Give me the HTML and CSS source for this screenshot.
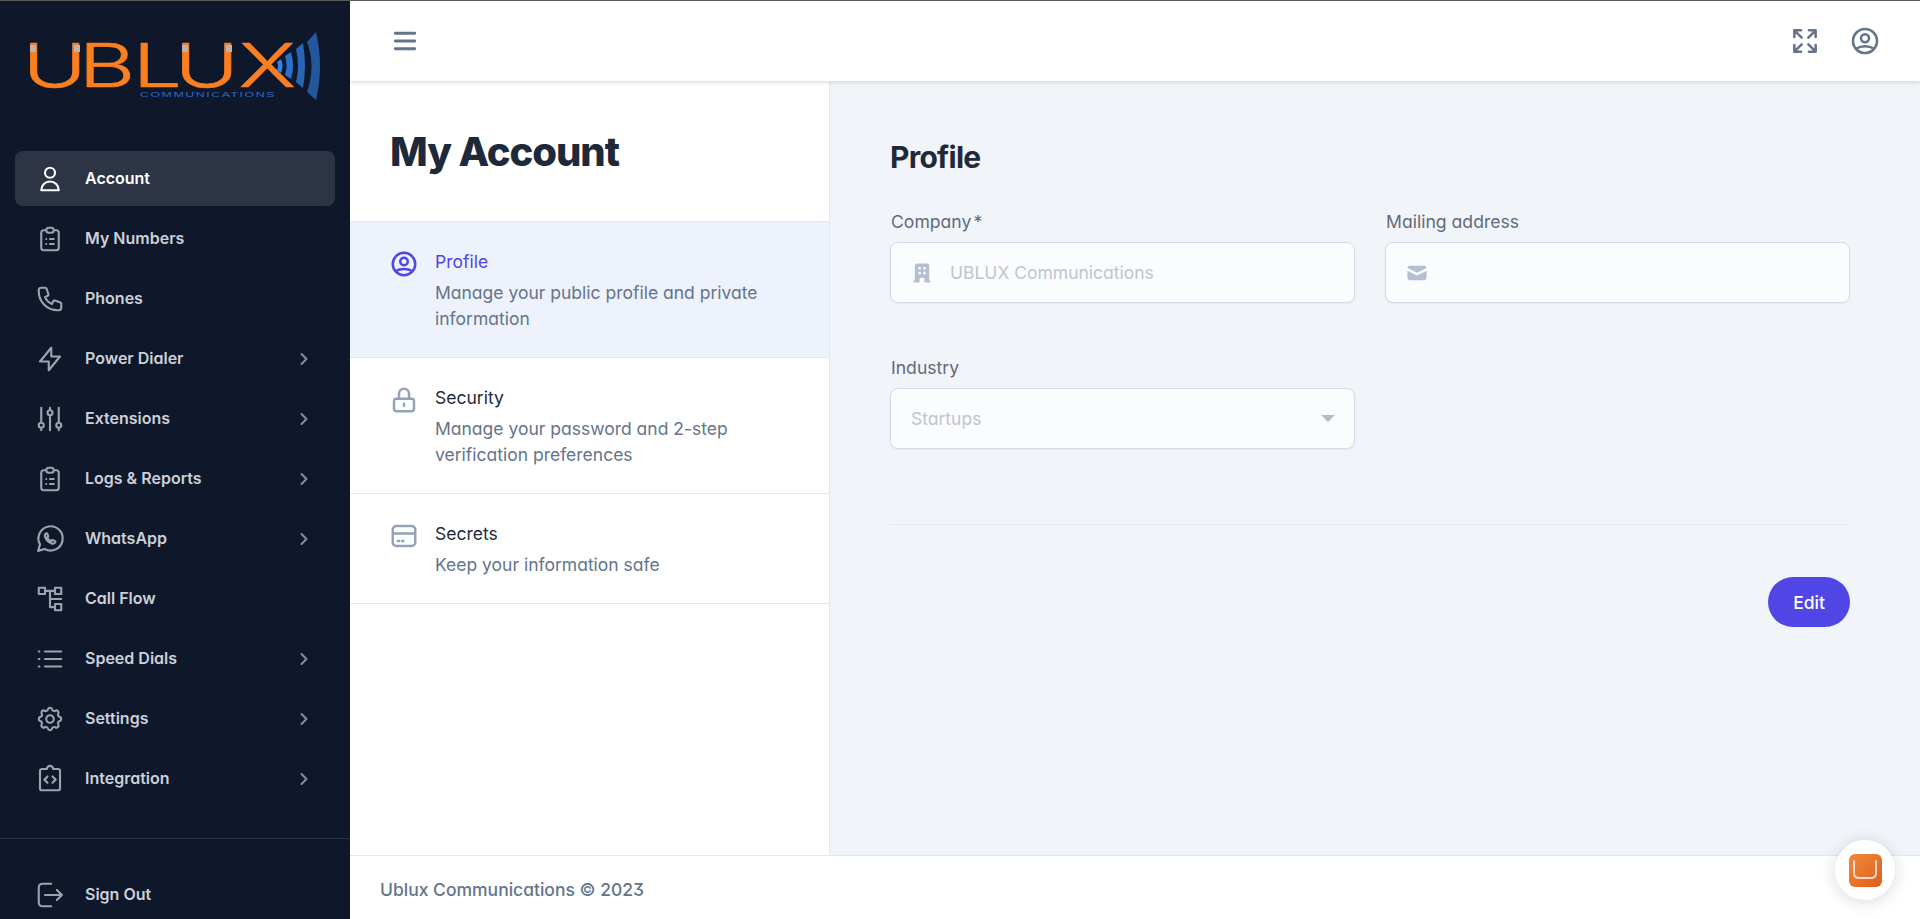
FILE: index.html
```html
<!DOCTYPE html>
<html lang="en">
<head>
<meta charset="utf-8">
<title>My Account</title>
<link rel="stylesheet" href="styles.css">
</head>
<body>
<svg class="defs" width="0" height="0" aria-hidden="true">
  <symbol id="i-user" viewBox="0 0 24 24"><path d="M16 7a4 4 0 1 1-8 0 4 4 0 0 1 8 0zM12 14a7 7 0 0 0-7 7h14a7 7 0 0 0-7-7z"/></symbol>
  <symbol id="i-clip" viewBox="0 0 24 24"><path d="M9 5H7a2 2 0 0 0-2 2v12a2 2 0 0 0 2 2h10a2 2 0 0 0 2-2V7a2 2 0 0 0-2-2h-2M9 5a2 2 0 0 0 2 2h2a2 2 0 0 0 2-2M9 5a2 2 0 0 1 2-2h2a2 2 0 0 1 2 2m-3 7h3m-3 4h3m-6-4h.01M9 16h.01"/></symbol>
  <symbol id="i-phone" viewBox="0 0 24 24"><path d="M3 5a2 2 0 0 1 2-2h3.28a1 1 0 0 1 .948.684l1.498 4.493a1 1 0 0 1-.502 1.21l-2.257 1.13a11.042 11.042 0 0 0 5.516 5.516l1.13-2.257a1 1 0 0 1 1.21-.502l4.493 1.498a1 1 0 0 1 .684.949V19a2 2 0 0 1-2 2h-1C9.716 21 3 14.284 3 6V5z"/></symbol>
  <symbol id="i-bolt" viewBox="0 0 24 24"><path d="M13 3L4 14h7v7l9-11h-7z"/></symbol>
  <symbol id="i-adjust" viewBox="0 0 24 24"><path d="M5 3v12m0 4v2M12 3v2m0 4v12M19 3v12m0 4v2M5 15a2 2 0 1 0 0 4 2 2 0 0 0 0-4zM12 5a2 2 0 1 0 0 4 2 2 0 0 0 0-4zM19 15a2 2 0 1 0 0 4 2 2 0 0 0 0-4z"/></symbol>
  <symbol id="i-whatsapp" viewBox="0 0 24 24"><path d="M2.500 21.500l1.500-5.200A9.700 9.700 0 1 1 7.700 20z"/><path d="M8.700 7.600c-.8.6-1 1.700-.5 3 1 2.400 2.700 4 5 4.900 1.200.4 2.300.2 2.900-.7.300-.5.300-.9-.1-1.100l-1.900-.9c-.3-.1-.5 0-.7.2l-.6.8c-1.400-.5-2.500-1.600-3.100-3l.7-.7c.2-.2.200-.4.100-.7l-.7-1.700c-.2-.4-.7-.4-1.100-.1z"/></symbol>
  <symbol id="i-flow" viewBox="0 0 24 24"><path d="M3 3h5v5H3zM16 3h5v5h-5zM16 16h5v5h-5zM8 5.500h8M12 5.500v13h4M12 12h9"/></symbol>
  <symbol id="i-list" viewBox="0 0 24 24"><path d="M8 6h13M8 12h13M8 18h13M3 6h.5M3 12h.5M3 18h.5"/></symbol>
  <symbol id="i-cog" viewBox="0 0 24 24"><path d="M10.325 4.317c.426-1.756 2.924-1.756 3.35 0a1.724 1.724 0 0 0 2.573 1.066c1.543-.94 3.31.826 2.370 2.370a1.724 1.724 0 0 0 1.065 2.572c1.756.426 1.756 2.924 0 3.350a1.724 1.724 0 0 0-1.066 2.573c.94 1.543-.826 3.31-2.370 2.370a1.724 1.724 0 0 0-2.572 1.065c-.426 1.756-2.924 1.756-3.350 0a1.724 1.724 0 0 0-2.573-1.066c-1.543.94-3.31-.826-2.370-2.370a1.724 1.724 0 0 0-1.065-2.572c-1.756-.426-1.756-2.924 0-3.350a1.724 1.724 0 0 0 1.066-2.573c-.94-1.543.826-3.31 2.370-2.370.996.608 2.296.07 2.572-1.065z"/><path d="M15 12a3 3 0 1 1-6 0 3 3 0 0 1 6 0z"/></symbol>
  <symbol id="i-code" viewBox="0 0 24 24"><path d="M9.500 4H5.500A1.500 1.500 0 0 0 4 5.500v14A1.500 1.500 0 0 0 5.500 21h13a1.500 1.500 0 0 0 1.500-1.500v-14A1.500 1.500 0 0 0 18.500 4h-4M9.500 4a2.500 2.500 0 0 1 5 0M10 10l-2.500 2.500L10 15M14 10l2.500 2.500L14 15"/></symbol>
  <symbol id="i-logout" viewBox="0 0 24 24"><path d="M13 3H6a3 3 0 0 0-3 3v12a3 3 0 0 0 3 3h7M8 12h13M17.500 8l4 4-4 4"/></symbol>
  <symbol id="i-chev" viewBox="0 0 20 20"><path d="M7.500 5l5 5-5 5"/></symbol>
  <symbol id="i-circle-user" viewBox="0 0 24 24"><path d="M5.121 17.804A13.937 13.937 0 0 1 12 16c2.500 0 4.847.655 6.879 1.804M15 10a3 3 0 1 1-6 0 3 3 0 0 1 6 0zM21 12a9 9 0 1 1-18 0 9 9 0 0 1 18 0z"/></symbol>
  <symbol id="i-lock" viewBox="0 0 24 24"><path d="M12 15v1.500M6 21h12a2 2 0 0 0 2-2v-6a2 2 0 0 0-2-2H6a2 2 0 0 0-2 2v6a2 2 0 0 0 2 2zM8 11V7a4 4 0 1 1 8 0v4"/></symbol>
  <symbol id="i-card" viewBox="0 0 24 24"><path d="M3 10h18M7 16h1M10.500 16h1M6 20h12a3 3 0 0 0 3-3V7a3 3 0 0 0-3-3H6a3 3 0 0 0-3 3v10a3 3 0 0 0 3 3z"/></symbol>
</svg>

<div class="app">
  <aside class="sidebar">
    <div class="logo">
      <svg class="logo-svg" width="300" height="72" viewBox="0 0 300 72">
        <g transform="scale(1.45 1)"><text class="logo-word" x="-5 33.600 70.900 99.800 143.800" y="57">UBLUX</text></g>
        <rect class="logo-cap" x="0" y="15" width="6" height="7"/>
        <rect class="logo-cap" x="44" y="15" width="6" height="7"/>
        <rect class="logo-cap" x="152" y="15" width="6" height="7"/>
        <rect class="logo-cap" x="196" y="15" width="6" height="7"/>
        <text class="logo-sub" x="110" y="67" textLength="136" lengthAdjust="spacingAndGlyphs">COMMUNICATIONS</text>
        <path class="wave1" d="M247 32L251 29Q254 36 251 43L247 40Q249 36 247 32z"/>
        <path class="wave2" d="M255 26L261 22Q265 36 261 49L255 45Q258 36 255 26z"/>
        <path class="wave3" d="M266 19L273 13Q277 36 273 58L266 52Q270 36 266 19z"/>
        <path class="wave4" d="M277 12L286 2Q294 36 286 70L277 62Q286 36 277 12z"/>
      </svg>
    </div>
    <nav class="nav">
      <a class="nav-item is-active"><svg class="nav-icon"><use href="#i-user"/></svg><span class="nav-label">Account</span></a>
      <a class="nav-item"><svg class="nav-icon"><use href="#i-clip"/></svg><span class="nav-label">My Numbers</span></a>
      <a class="nav-item"><svg class="nav-icon"><use href="#i-phone"/></svg><span class="nav-label">Phones</span></a>
      <a class="nav-item"><svg class="nav-icon"><use href="#i-bolt"/></svg><span class="nav-label">Power Dialer</span><svg class="nav-chev"><use href="#i-chev"/></svg></a>
      <a class="nav-item"><svg class="nav-icon"><use href="#i-adjust"/></svg><span class="nav-label">Extensions</span><svg class="nav-chev"><use href="#i-chev"/></svg></a>
      <a class="nav-item"><svg class="nav-icon"><use href="#i-clip"/></svg><span class="nav-label">Logs &amp; Reports</span><svg class="nav-chev"><use href="#i-chev"/></svg></a>
      <a class="nav-item"><svg class="nav-icon"><use href="#i-whatsapp"/></svg><span class="nav-label">WhatsApp</span><svg class="nav-chev"><use href="#i-chev"/></svg></a>
      <a class="nav-item"><svg class="nav-icon"><use href="#i-flow"/></svg><span class="nav-label">Call Flow</span></a>
      <a class="nav-item"><svg class="nav-icon"><use href="#i-list"/></svg><span class="nav-label">Speed Dials</span><svg class="nav-chev"><use href="#i-chev"/></svg></a>
      <a class="nav-item"><svg class="nav-icon"><use href="#i-cog"/></svg><span class="nav-label">Settings</span><svg class="nav-chev"><use href="#i-chev"/></svg></a>
      <a class="nav-item"><svg class="nav-icon"><use href="#i-code"/></svg><span class="nav-label">Integration</span><svg class="nav-chev"><use href="#i-chev"/></svg></a>
    </nav>
    <div class="signout">
      <a class="nav-item"><svg class="nav-icon"><use href="#i-logout"/></svg><span class="nav-label">Sign Out</span></a>
    </div>
  </aside>

  <div class="content">
    <header class="topbar">
      <svg class="bar-icon menu-icon" viewBox="0 0 24 24"><path d="M4.700 6.200h14.600M4.700 12h14.600M4.700 17.800h14.600"/></svg>
      <div class="top-actions">
        <svg class="bar-icon" viewBox="0 0 24 24"><path d="M4 9V4h5M4 4l5.500 5.500M20 9V4h-5M20 4l-5.500 5.500M4 15v5h5M4 20l5.500-5.500M20 15v5h-5M20 20l-5.500-5.500"/></svg>
        <svg class="bar-icon"><use href="#i-circle-user"/></svg>
      </div>
    </header>

    <div class="workspace">
      <section class="panel">
        <h1 class="panel-title">My Account</h1>
        <a class="tab is-active">
          <svg class="tab-icon"><use href="#i-circle-user"/></svg>
          <div class="tab-text"><div class="tab-name">Profile</div><div class="tab-desc">Manage your public profile and private information</div></div>
        </a>
        <a class="tab">
          <svg class="tab-icon"><use href="#i-lock"/></svg>
          <div class="tab-text"><div class="tab-name">Security</div><div class="tab-desc">Manage your password and 2-step verification preferences</div></div>
        </a>
        <a class="tab">
          <svg class="tab-icon"><use href="#i-card"/></svg>
          <div class="tab-text"><div class="tab-name">Secrets</div><div class="tab-desc">Keep your information safe</div></div>
        </a>
      </section>

      <main class="main">
        <h2 class="main-title">Profile</h2>
        <div class="form-grid">
          <div class="field">
            <label class="field-label">Company<span class="req">*</span></label>
            <div class="input">
              <svg class="input-icon" viewBox="0 0 20 20"><path fill-rule="evenodd" d="M4 4a2 2 0 0 1 2-2h8a2 2 0 0 1 2 2v12a1 1 0 1 1 0 2h-3a1 1 0 0 1-1-1v-2a1 1 0 0 0-1-1H9a1 1 0 0 0-1 1v2a1 1 0 0 1-1 1H4a1 1 0 1 1 0-2V4zm3 1h2v2H7V5zm2 4H7v2h2V9zm2-4h2v2h-2V5zm2 4h-2v2h2V9z" clip-rule="evenodd"/></svg>
              <span class="input-text">UBLUX Communications</span>
            </div>
          </div>
          <div class="field">
            <label class="field-label">Mailing address</label>
            <div class="input">
              <svg class="input-icon" viewBox="0 0 20 20"><path d="M2.003 5.884L10 9.882l7.997-3.998A2 2 0 0 0 16 4H4a2 2 0 0 0-1.997 1.884z"/><path d="M18 8.118l-8 4-8-4V14a2 2 0 0 0 2 2h12a2 2 0 0 0 2-2V8.118z"/></svg>
            </div>
          </div>
          <div class="field">
            <label class="field-label">Industry</label>
            <div class="input is-select">
              <span class="input-text">Startups</span>
              <span class="caret"></span>
            </div>
          </div>
        </div>
        <div class="form-footer">
          <button class="btn-edit" type="button">Edit</button>
        </div>
      </main>
    </div>

    <footer class="footer">Ublux Communications © 2023</footer>
  </div>
</div>

<div class="chat">
  <div class="chat-tile">
    <svg class="chat-u" viewBox="0 0 24 20"><path d="M1 1v12q0 5 5 5h12q5 0 5-5V1"/></svg>
  </div>
</div>
</body>
</html>
```

FILE: styles.css
```css
* { box-sizing: border-box; }
html, body { height: 100%; margin: 0; }
body {
  font-family: Inter, "Noto Sans", sans-serif;
  font-feature-settings: "cv11", "ss01";
  border-top: 1px solid #5a5a5a;
  overflow: hidden;
  color: #1e293b;
  background: #fff;
}
.defs { position: absolute; }
svg { display: block; flex: none; fill: none; stroke: currentColor; stroke-linecap: round; stroke-linejoin: round; }
.app { display: flex; height: 918px; }

/* sidebar */
.sidebar { width: 350px; flex: none; display: flex; flex-direction: column; background: #0f172a; }
.logo { height: 150px; padding: 29px 0 0 30px; }
.logo-svg { overflow: visible; }
.logo-word { font-family: Inter, sans-serif; font-feature-settings: normal; font-size: 60px; font-weight: 300; fill: #fb7f1e; stroke: #fb7f1e; stroke-width: .7; stroke-linecap: butt; }
.logo-cap { fill: #b3b5b8; stroke: none; }
.logo-sub { font-family: "Liberation Sans", sans-serif; font-size: 8px; letter-spacing: 1px; fill: #2c6bc4; stroke: none; }
.wave1 { fill: #2f83ea; stroke: none; }
.wave2 { fill: #2a70c8; stroke: none; }
.wave3 { fill: #2866b4; stroke: none; }
.wave4 { fill: #24569c; stroke: none; }
.nav { flex: 1; padding: 0 15px; display: flex; flex-direction: column; gap: 5px; }
.nav-item { display: flex; align-items: center; height: 55px; padding: 0 20px; border-radius: 8px; color: #cbd0d9; }
.nav-item.is-active { background: #2d3446; color: #fff; }
.nav-icon { width: 30px; height: 30px; stroke-width: 1.7; color: #9ca3af; }
.is-active .nav-icon { color: #fff; }
.nav-label { margin: 0 0 2px 20px; flex: 1; font-size: 16px; font-weight: 600; line-height: 20px; }
.nav-chev { width: 20px; height: 20px; stroke-width: 2; color: #8390a5; margin-right: 1px; }
.signout { height: 81px; padding: 28px 15px 0; border-top: 1px solid #283347; }

/* content */
.content { flex: 1; min-width: 0; display: flex; flex-direction: column; }
.topbar { height: 80px; flex: none; display: flex; align-items: center; justify-content: space-between; padding: 0 39px; background: #fff; box-shadow: 0 1px 4px rgba(15,23,42,.18); position: relative; z-index: 2; }
.bar-icon { width: 32px; height: 32px; stroke-width: 1.9; color: #64748b; }
.top-actions { display: flex; gap: 28px; }
.workspace { flex: 1; display: flex; min-height: 0; }

/* left panel */
.panel { width: 480px; flex: none; background: #fff; border-right: 1px solid #e2e8f0; }
.panel-title { margin: 0; height: 141px; padding: 47px 40px 0; font-size: 40px; line-height: 48px; font-weight: 800; letter-spacing: -.027em; color: #1e293b; border-bottom: 1px solid #e2e8f0; }
.tab { display: flex; gap: 16px; padding: 27px 40px 25px 39px; border-bottom: 1px solid #e2e8f0; }
.tab.is-active { background: #eef2fd; }
.tab-icon { width: 30px; height: 30px; stroke-width: 2; color: #94a3b8; }
.is-active .tab-icon { color: #4f46e5; }
.tab-text { flex: 1; min-width: 0; }
.tab-name { font-size: 17.5px; line-height: 26px; font-weight: 400; color: #1e293b; }
.is-active .tab-name { color: #4f46e5; }
.tab-desc { margin-top: 5px; font-size: 17.5px; line-height: 26px; color: #64748b; }

/* main */
.main { flex: 1; min-width: 0; padding: 56px 70px 0 60px; background: #f1f5f9; }
.main-title { margin: 0; font-size: 30px; line-height: 40px; font-weight: 700; letter-spacing: -.025em; color: #1e293b; }
.form-grid { display: grid; grid-template-columns: 465px 465px; column-gap: 30px; row-gap: 53px; margin-top: 33px; }
.field-label { display: block; padding-left: 1px; font-size: 17.6px; font-weight: 400; line-height: 24px; margin-bottom: 8px; color: #5f6b7a; }
.req { margin-left: 2px; }
.input { display: flex; align-items: center; height: 61px; padding: 0 20px; border: 1px solid #d3dbe6; border-radius: 8px; background: #fbfcfe; box-shadow: 0 1px 2px rgba(0,0,0,.05); }
.input-icon { width: 24px; height: 24px; margin: 0 16px 0 -1px; fill: #b4c0d1; stroke: none; }
.input-text { flex: 1; font-size: 17.5px; color: #bfc5cd; }
.caret { width: 0; height: 0; margin-right: -1px; border-left: 7px solid transparent; border-right: 7px solid transparent; border-top: 7px solid #b6bcc6; }
.form-footer { margin-top: 75px; padding-top: 52px; border-top: 1px solid #e2e8f0; display: flex; justify-content: flex-end; }
.btn-edit { height: 50px; width: 82px; border: 0; border-radius: 25px; background: #4f46e5; color: #fff; font: inherit; font-size: 17.5px; font-weight: 500; }

/* footer */
.footer { height: 64px; flex: none; padding: 4px 30px 0; display: flex; align-items: center; font-size: 17.5px; font-weight: 500; color: #64748b; background: #fff; border-top: 1px solid #e2e8f0; }

/* chat bubble */
.chat { position: fixed; right: 25px; bottom: 19px; width: 60px; height: 60px; border-radius: 50%; background: #fff; box-shadow: 0 2px 16px rgba(15,23,42,.16); display: flex; align-items: center; justify-content: center; }
.chat-tile { width: 33px; height: 33px; border-radius: 6px; background: linear-gradient(135deg, #f08a3c, #df5e1a); display: flex; align-items: center; justify-content: center; }
.chat-u { stroke: #f3d6cc; stroke-width: 2; width: 24px; height: 20px; }
.menu-icon { stroke-width: 2.1; }
```
